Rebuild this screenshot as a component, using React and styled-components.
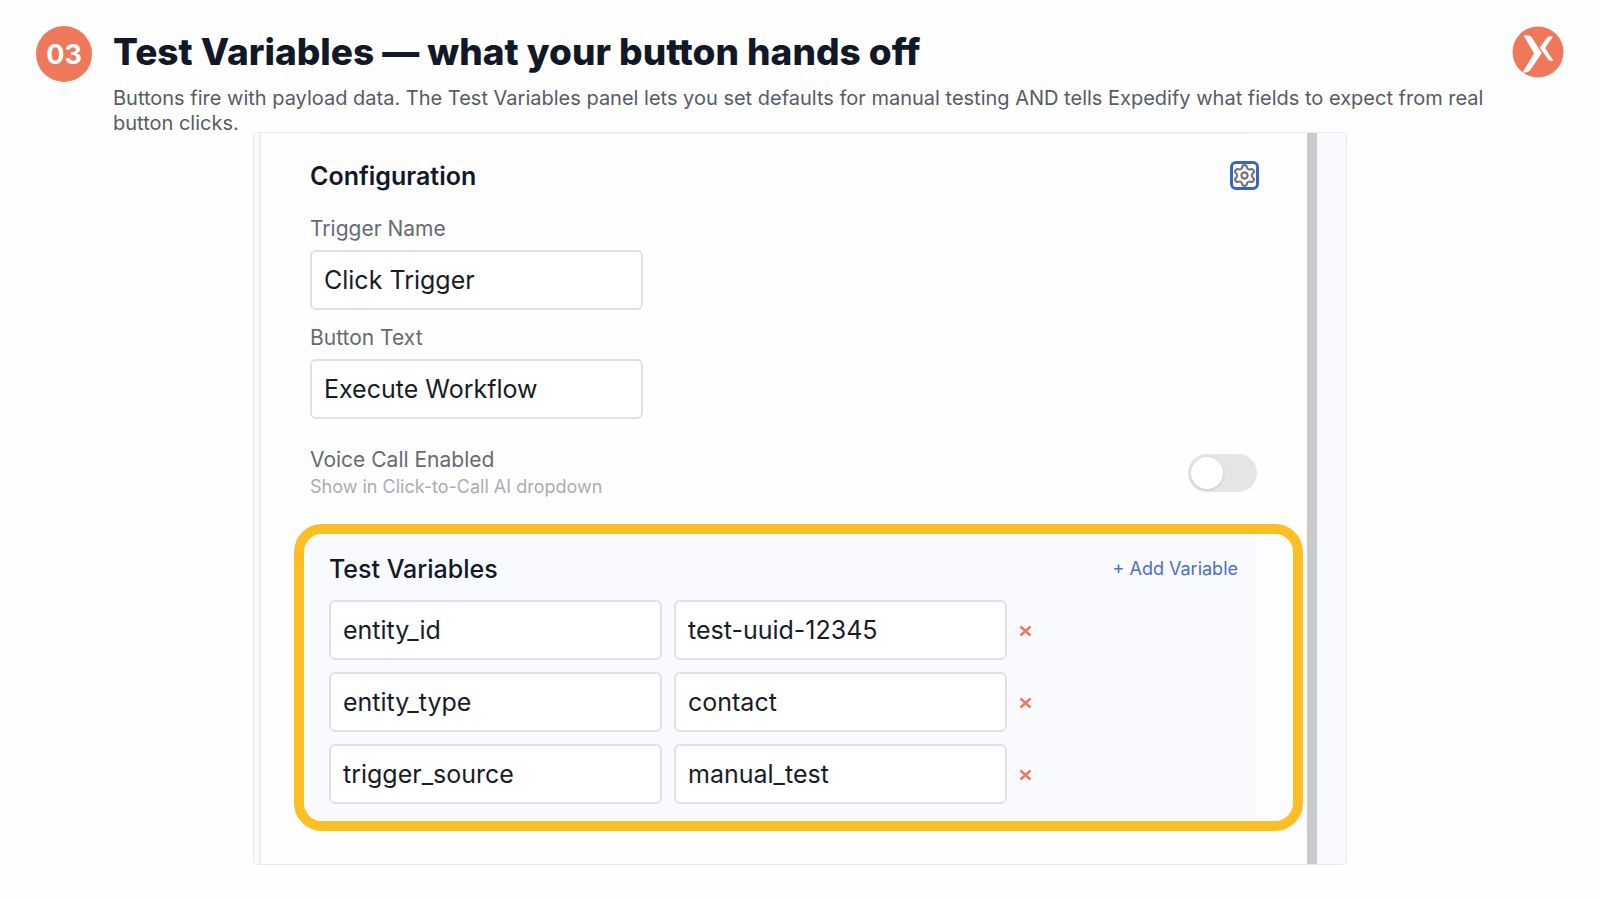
import { useState } from 'react';
import styled, { createGlobalStyle } from 'styled-components';
import { Settings } from 'lucide-react';

const GlobalStyle = createGlobalStyle`
  * {
    box-sizing: border-box;
  }

  body {
    margin: 0;
    background-color: #fefefe;
    color: #111827;
    font-family: Inter, 'Liberation Sans', sans-serif;
  }

  button,
  input {
    font-family: inherit;
  }
`;

const initialVariables = [
  { id: 1, name: 'entity_id', value: 'test-uuid-12345' },
  { id: 2, name: 'entity_type', value: 'contact' },
  { id: 3, name: 'trigger_source', value: 'manual_test' },
];

const Slide = styled.div`
  padding: 26px 36px 34px;
`;

const SlideHeader = styled.header`
  display: flex;
  align-items: flex-start;
  gap: 21px;
`;

const StepNumber = styled.div`
  flex: none;
  display: flex;
  align-items: center;
  justify-content: center;
  width: 56px;
  height: 56px;
  border-radius: 50%;
  background-color: #f0785a;
  color: #fff;
  font-size: 27px;
  font-weight: 700;
`;

const SlideHeading = styled.div`
  flex: auto;

  & h1 {
    margin: 0 0 8px;
    font-size: 37px;
    line-height: 52px;
    font-weight: 800;
  }

  & p {
    max-width: 1376px;
    margin: 0;
    color: #565b66;
    font-size: 20px;
    line-height: 25px;
  }
`;

const Logo = styled.svg`
  flex: none;
  width: 52px;
  height: 52px;
`;

const Frame = styled.main`
  display: flex;
  max-width: 1094px;
  margin: -4px auto 0;
  padding-left: 5px;
  border: 1px solid #e9eaef;
  border-radius: 5px;
  background-color: #f9fafe;
  overflow: hidden;
`;

const Panel = styled.section`
  flex: auto;
  padding: 0 50px 33px 49px;
  border-left: 2px solid #edeef3;
  background-color: #fefefe;
`;

const Divider = styled.hr`
  height: 1px;
  margin: 0 10px 27px;
  border: none;
  background-color: #eeeff3;
`;

const Scrollbar = styled.div`
  flex: none;
  width: 10px;
  margin-right: 29px;
  background-color: #c9cbca;
`;

const PanelHeader = styled.div`
  display: flex;
  align-items: center;
  justify-content: space-between;
  height: 29px;
  margin-bottom: 25px;
`;

const PanelTitle = styled.h2`
  margin: 0;
  font-size: 25px;
  line-height: 30px;
  font-weight: ${({ $weight }) => $weight || 600};
`;

const SettingsButton = styled.button`
  display: flex;
  align-items: center;
  justify-content: center;
  width: 25px;
  height: 25px;
  padding: 0;
  border: none;
  border-radius: 4px;
  outline: 3px solid #3865c5;
  outline-offset: -1px;
  background-color: #fff;
  color: #6f727a;
`;

const Field = styled.div`
  display: flex;
  flex-direction: column;
  align-items: flex-start;
  gap: 7px;
  margin-bottom: 14px;
`;

const Label = styled.label`
  display: block;
  color: #666a74;
  font-size: 21px;
  line-height: 28px;
`;

const TextInput = styled.input`
  width: 333px;
  height: 60px;
  padding: 0 12px;
  border: 2px solid #dfe1e7;
  border-radius: 6px;
  background-color: #fff;
  color: #181c26;
  font-size: 25px;
`;

const ToggleRow = styled.div`
  display: flex;
  align-items: center;
  justify-content: space-between;
  margin: 27px 0 24px;
`;

const Hint = styled.p`
  margin: 0;
  color: #aaadb4;
  font-size: 18px;
  line-height: 26px;
`;

const Toggle = styled.input`
  appearance: none;
  display: flex;
  align-items: center;
  width: 69px;
  height: 38px;
  margin: 0;
  padding: 0 3px;
  border-radius: 19px;
  background-color: #e5e5e8;

  &::before {
    content: '';
    width: 32px;
    height: 32px;
    border-radius: 50%;
    background-color: #fff;
    box-shadow: 0 1px 3px rgba(0, 0, 0, 0.15);
  }

  &:checked {
    justify-content: flex-end;
    background-color: #3865c5;
  }
`;

const Highlight = styled.div`
  margin: 0 -46px 0 -16px;
  padding: 0 36px 0 6px;
  border: 10px solid #fbbf24;
  border-radius: 28px;
  overflow: hidden;
`;

const VariablesPanel = styled.section`
  padding: 20px 19px 17px;
  background-color: #f9fafe;
`;

const VariablesHeader = styled.div`
  display: flex;
  align-items: center;
  justify-content: space-between;
  margin-bottom: 16px;
`;

const AddButton = styled.button`
  padding: 0;
  border: none;
  background: none;
  color: #4a6fcc;
  font-size: 18px;
  line-height: 26px;
`;

const VariableList = styled.div`
  display: flex;
  flex-direction: column;
  gap: 12px;
`;

const VariableRow = styled.div`
  display: flex;
  align-items: center;
  gap: 12px;
`;

const RemoveButton = styled.button`
  display: flex;
  padding: 0;
  border: none;
  background: none;
  color: #f0785a;
`;

const CrossIcon = () => (
  <svg width="13" height="13" viewBox="0 0 13 13">
    <path d="M1.5 2.5 L11.5 11.5 M11.5 2.5 L1.5 11.5" stroke="currentColor" strokeWidth="2.4" />
  </svg>
);

const BrandLogo = () => (
  <Logo viewBox="0 0 52 52" role="img" aria-label="Expedify">
    <circle cx="26" cy="26" r="25.5" fill="#f0785a" />
    <path
      d="M11.5 9.5 H16.5 Q18.5 9.5 19.6 11.2 L29.8 27 L19 43 Q16.500 46.500 13.500 46.500 H10.500 L22 27.500 Z"
      fill="#fff"
    />
    <path
      d="M41 10.500 H37.500 Q35.800 10.500 34.600 12.200 L27.800 21.400 L35.600 32.800 Q37.200 35 40 35 H41.500 L33.200 22.100 Z"
      fill="#fff"
    />
  </Logo>
);

const App = () => {
  const [triggerName, setTriggerName] = useState('Click Trigger');
  const [buttonText, setButtonText] = useState('Execute Workflow');
  const [voiceEnabled, setVoiceEnabled] = useState(false);
  const [variables, setVariables] = useState(initialVariables);

  const addVariable = () => {
    setVariables([...variables, { id: Date.now(), name: '', value: '' }]);
  };

  const changeVariable = (id, key, text) => {
    setVariables(
      variables.map((item) => (item.id === id ? { ...item, [key]: text } : item))
    );
  };

  const removeVariable = (id) => {
    setVariables(variables.filter((item) => item.id !== id));
  };

  return (
    <Slide>
      <GlobalStyle />
      <SlideHeader>
        <StepNumber>03</StepNumber>
        <SlideHeading>
          <h1>Test Variables — what your button hands off</h1>
          <p>
            Buttons fire with payload data. The Test Variables panel lets you set
            defaults for manual testing AND tells Expedify what fields to expect
            from real button clicks.
          </p>
        </SlideHeading>
        <BrandLogo />
      </SlideHeader>

      <Frame>
        <Panel>
          <Divider />
          <PanelHeader>
            <PanelTitle>Configuration</PanelTitle>
            <SettingsButton aria-label="Settings">
              <Settings size={25} strokeWidth={2} />
            </SettingsButton>
          </PanelHeader>

          <Field>
            <Label htmlFor="trigger-name">Trigger Name</Label>
            <TextInput
              id="trigger-name"
              value={triggerName}
              onChange={({ target }) => setTriggerName(target.value)}
            />
          </Field>
          <Field>
            <Label htmlFor="button-text">Button Text</Label>
            <TextInput
              id="button-text"
              value={buttonText}
              onChange={({ target }) => setButtonText(target.value)}
            />
          </Field>

          <ToggleRow>
            <div>
              <Label htmlFor="voice-call">Voice Call Enabled</Label>
              <Hint>Show in Click-to-Call AI dropdown</Hint>
            </div>
            <Toggle
              id="voice-call"
              type="checkbox"
              role="switch"
              checked={voiceEnabled}
              onChange={({ target }) => setVoiceEnabled(target.checked)}
            />
          </ToggleRow>

          <Highlight>
            <VariablesPanel>
              <VariablesHeader>
                <PanelTitle $weight={500}>Test Variables</PanelTitle>
                <AddButton onClick={addVariable}>+ Add Variable</AddButton>
              </VariablesHeader>
              <VariableList>
                {variables.map(({ id, name, value }) => (
                  <VariableRow key={id}>
                    <TextInput
                      aria-label="Variable name"
                      value={name}
                      onChange={({ target }) => changeVariable(id, 'name', target.value)}
                    />
                    <TextInput
                      aria-label="Variable value"
                      value={value}
                      onChange={({ target }) => changeVariable(id, 'value', target.value)}
                    />
                    <RemoveButton
                      aria-label="Remove variable"
                      onClick={() => removeVariable(id)}
                    >
                      <CrossIcon />
                    </RemoveButton>
                  </VariableRow>
                ))}
              </VariableList>
            </VariablesPanel>
          </Highlight>
        </Panel>
        <Scrollbar />
      </Frame>
    </Slide>
  );
};

export default App;
